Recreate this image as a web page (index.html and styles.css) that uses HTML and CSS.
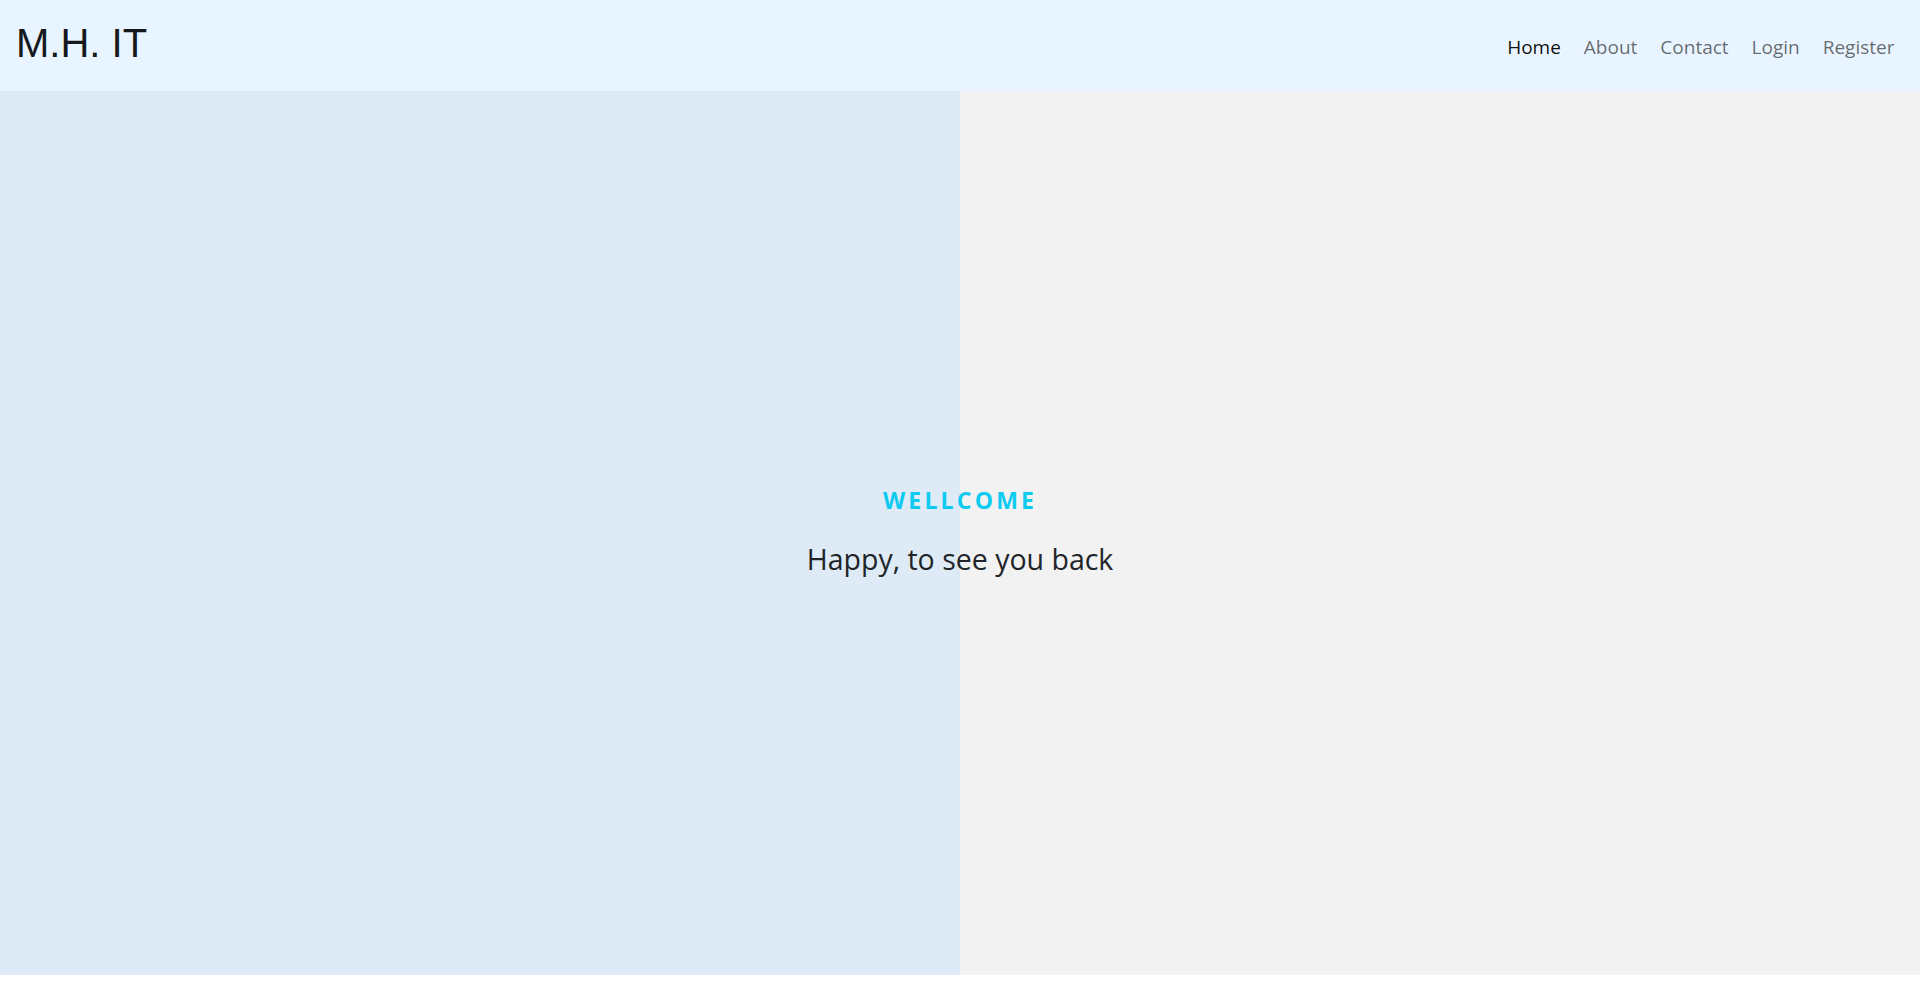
FILE: index.html
```html
<!DOCTYPE html>
<html lang="en">
<head>
<meta charset="utf-8">
<title>M.H. IT</title>
<link rel="stylesheet" href="styles.css">
</head>
<body>
<nav class="navbar">
  <a class="brand" href="#">M.H. IT</a>
  <ul class="nav">
    <li><a class="nav-link active" href="#">Home</a></li>
    <li><a class="nav-link" href="#">About</a></li>
    <li><a class="nav-link" href="#">Contact</a></li>
    <li><a class="nav-link" href="#">Login</a></li>
    <li><a class="nav-link" href="#">Register</a></li>
  </ul>
</nav>
<section class="hero">
  <div class="hero-text">
    <h4 class="welcome">Wellcome</h4>
    <h2 class="tagline">Happy, to see you back</h2>
  </div>
</section>
</body>
</html>
```

FILE: styles.css
```css
* { box-sizing: border-box; }
html, body { margin: 0; padding: 0; }
body {
  font-family: "Open Sans", "Noto Sans", sans-serif;
  color: #212529;
  background: #ffffff;
}
.navbar {
  height: 91px;
  background: #e8f4ff;
  display: flex;
  align-items: center;
  justify-content: space-between;
  padding: 0 14px 0 16px;
}
.brand {
  font-family: "Liberation Sans", Arial, sans-serif;
  font-size: 40px;
  color: #16191c;
  text-decoration: none;
  margin-top: -4px;
}
.nav {
  list-style: none;
  margin: 0;
  padding: 0;
  display: flex;
  margin-top: 2px;
}
.nav-link {
  display: block;
  padding: 8px 11.5px;
  font-size: 19px;
  font-weight: 500;
  color: rgba(0, 0, 0, 0.58);
  text-decoration: none;
}
.nav-link.active { color: rgba(0, 0, 0, 0.94); }
.hero {
  height: 90vh;
  background: linear-gradient(to right, #deebf7 0, #deebf7 50%, #f2f2f2 50%, #f2f2f2 100%);
  display: flex;
  align-items: center;
  justify-content: center;
}
.hero-text { text-align: center; margin-top: -3px; }
.welcome {
  margin: 0 0 27px;
  font-size: 23px;
  font-weight: 700;
  text-transform: uppercase;
  letter-spacing: 3.2px;
  color: #0dcaf0;
  line-height: 1.2;
}
.tagline {
  margin: 0;
  font-size: 28.5px;
  font-weight: 400;
  line-height: 1.2;
  color: #212529;
}
```
